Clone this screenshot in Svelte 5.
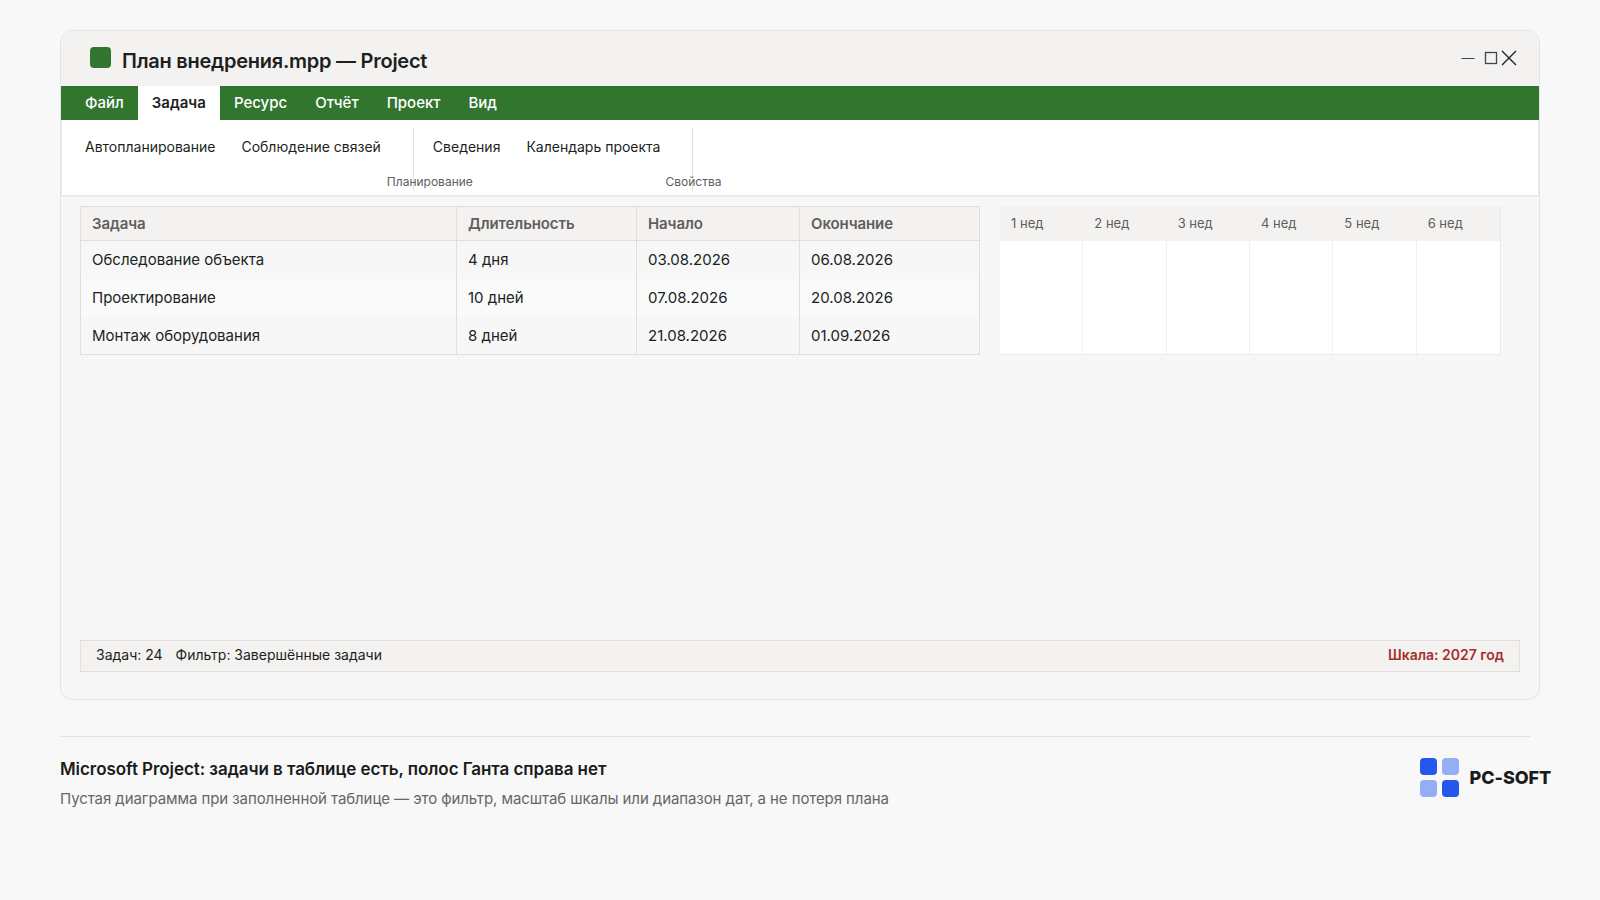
<script>
  const tabs = ['Файл', 'Задача', 'Ресурс', 'Отчёт', 'Проект', 'Вид'];
  const rows = [
    ['Обследование объекта', '4 дня', '03.08.2026', '06.08.2026'],
    ['Проектирование', '10 дней', '07.08.2026', '20.08.2026'],
    ['Монтаж оборудования', '8 дней', '21.08.2026', '01.09.2026']
  ];
  const weeks = ['1 нед', '2 нед', '3 нед', '4 нед', '5 нед', '6 нед'];
</script>

<div class="page">
  <div class="window">
    <header class="titlebar">
      <div class="title">
        <span class="app-icon"></span>
        <h1>План внедрения.mpp — Project</h1>
      </div>
      <div class="controls">
        <svg width="14" height="14" viewBox="0 0 14 14"><path d="M0.5 7.5H13.5" stroke="#444" stroke-width="1.1" fill="none" /></svg>
        <svg width="14" height="14" viewBox="0 0 14 14"><rect x="1.5" y="1.5" width="11" height="11" stroke="#444" stroke-width="1.3" fill="none" /></svg>
        <svg width="16" height="16" viewBox="0 0 16 16"><path d="M1 1L15 15M15 1L1 15" stroke="#222" stroke-width="1.4" fill="none" /></svg>
      </div>
    </header>

    <nav class="tabs">
      {#each tabs as tab}
        <span class="tab" class:active={tab === 'Задача'}>{tab}</span>
      {/each}
    </nav>

    <div class="ribbon">
      <div class="group">
        <span>Автопланирование</span>
        <span>Соблюдение связей</span>
        <small class="plan">Планирование</small>
      </div>
      <div class="group">
        <span>Сведения</span>
        <span>Календарь проекта</span>
        <small class="props">Свойства</small>
      </div>
    </div>

    <div class="content">
      <div class="views">
        <table>
          <thead>
            <tr>
              <th class="c1">Задача</th>
              <th class="c2">Длительность</th>
              <th class="c3">Начало</th>
              <th>Окончание</th>
            </tr>
          </thead>
          <tbody>
            {#each rows as row}
              <tr>
                {#each row as cell}
                  <td>{cell}</td>
                {/each}
              </tr>
            {/each}
          </tbody>
        </table>

        <div class="gantt">
          {#each weeks as week}
            <div class="week">
              <div class="week-head">{week}</div>
              <div class="week-body"></div>
            </div>
          {/each}
        </div>
      </div>

      <div class="status">
        <div class="status-left">
          <span>Задач: 24</span>
          <span>Фильтр: Завершённые задачи</span>
        </div>
        <strong>Шкала: 2027 год</strong>
      </div>
    </div>
  </div>

  <footer class="footer">
    <div>
      <h2>Microsoft Project: задачи в таблице есть, полос Ганта справа нет</h2>
      <p>Пустая диаграмма при заполненной таблице — это фильтр, масштаб шкалы или диапазон дат, а не потеря плана</p>
    </div>
    <div class="logo">
      <div class="logo-mark">
        <i></i><i class="light"></i><i class="light"></i><i></i>
      </div>
      <span>PC-SOFT</span>
    </div>
  </footer>
</div>

<style>
  :global(body) {
    background: #f8f8f8;
    font-family: Inter, "Noto Sans", sans-serif;
    color: #201f1e;
  }

  .page {
    width: 1600px;
    height: 900px;
    box-sizing: border-box;
    padding: 30px 60px 0;
    overflow: hidden;
  }

  .window {
    width: 1480px;
    height: 670px;
    box-sizing: border-box;
    border: 1px solid #e4e4e4;
    border-radius: 12px;
    background: #f7f7f7;
    overflow: hidden;
    display: flex;
    flex-direction: column;
  }

  .titlebar {
    height: 55px;
    flex: none;
    background: #f3f2f1;
    display: flex;
    justify-content: space-between;
    align-items: center;
    padding: 0 22px 0 29px;
  }

  .title {
    display: flex;
    align-items: center;
    gap: 11px;
  }

  .app-icon {
    width: 21px;
    height: 21px;
    border-radius: 4px;
    background: #31752f;
    margin-top: -3px;
  }

  h1 {
    margin: 4px 0 0;
    font-size: 20px;
    font-weight: 600;
    line-height: 28px;
    letter-spacing: -0.25px;
  }

  .controls {
    display: flex;
    align-items: center;
    gap: 3px;
    margin-top: -2px;
  }

  .controls svg:first-child {
    margin-right: 6px;
  }

  .tabs {
    height: 34px;
    flex: none;
    background: #31752f;
    display: flex;
    padding-left: 10px;
    box-sizing: border-box;
  }

  .tab {
    padding: 0 14px;
    font-size: 15px;
    font-weight: 500;
    line-height: 33px;
    color: #fff;
  }

  .tab.active {
    background: #fff;
    color: #201f1e;
    font-weight: 600;
  }

  .ribbon {
    height: 77px;
    flex: none;
    box-sizing: border-box;
    background: #fff;
    border: 1px solid #ebebeb;
    border-width: 0 1px 2px;
    display: flex;
    align-items: flex-start;
    padding: 8px 0 0 21px;
    font-size: 14px;
  }

  .group {
    position: relative;
    height: 63px;
    display: flex;
    gap: 26px;
    padding: 9px 32px 0 2px;
    box-sizing: border-box;
    border-right: 1px solid #e1dfdd;
    margin-right: 17px;
  }

  .group span {
    line-height: 20px;
    white-space: nowrap;
  }

  .group small {
    position: absolute;
    bottom: 1px;
    font-size: 12px;
    line-height: 16px;
    color: #605e5c;
  }

  .plan {
    right: -60px;
  }

  .props {
    right: -29px;
  }

  .content {
    flex: 1;
    display: flex;
    flex-direction: column;
    justify-content: space-between;
    padding: 9px 19px 27px;
  }

  .views {
    display: flex;
    gap: 20px;
    align-items: flex-start;
  }

  table {
    width: 900px;
    height: 149px;
    flex: none;
    border-collapse: collapse;
    table-layout: fixed;
    border: 1px solid #e1dfdd;
    font-size: 15px;
  }

  th {
    box-sizing: border-box;
    height: 34px;
    padding: 0 11px;
    text-align: left;
    font-size: 15px;
    font-weight: 600;
    letter-spacing: -0.1px;
    color: #605e5c;
    background: #f3f2f1;
    border: 1px solid #e1dfdd;
  }

  td {
    padding: 0 11px;
    height: 37px;
    border-left: 1px solid #e1dfdd;
  }

  tbody tr:nth-child(even) td {
    background: #fafafa;
  }

  .c1 {
    width: 376px;
  }

  .c2 {
    width: 180px;
  }

  .c3 {
    width: 163px;
  }

  .gantt {
    width: 501px;
    height: 149px;
    display: grid;
    grid-template-columns: repeat(6, 1fr);
    background: #fff;
    border-bottom: 1px solid #ebebeb;
    border-right: 1px solid #ebebeb;
    box-sizing: border-box;
  }

  .week {
    display: flex;
    flex-direction: column;
  }

  .week-head {
    height: 35px;
    flex: none;
    box-sizing: border-box;
    padding: 8px 11px 0;
    background: #f3f2f1;
    font-size: 13px;
    line-height: 18px;
    color: #605e5c;
  }

  .week-body {
    flex: 1;
    border-right: 1px solid #f0f0f0;
  }

  .week:last-child .week-body {
    border-right: 0;
  }

  .status {
    height: 32px;
    box-sizing: border-box;
    display: flex;
    justify-content: space-between;
    align-items: center;
    padding: 0 15px 3px;
    background: #f3f2f1;
    border: 1px solid #e1dfdd;
    font-size: 14px;
  }

  .status-left {
    display: flex;
    gap: 13px;
  }

  .status strong {
    font-weight: 600;
    color: #a4302f;
  }

  .footer {
    width: 1470px;
    margin-top: 36px;
    border-top: 1px solid #e1e1e1;
    padding-top: 21px;
    display: flex;
    justify-content: space-between;
    align-items: flex-start;
    box-sizing: border-box;
  }

  h2 {
    margin: 0;
    font-size: 17px;
    font-weight: 600;
    line-height: 22px;
    letter-spacing: -0.06px;
    color: #1b1b1b;
  }

  p {
    margin: 9px 0 0;
    font-size: 15px;
    line-height: 20px;
    letter-spacing: -0.08px;
    color: #666;
  }

  .logo {
    display: flex;
    align-items: center;
    gap: 11px;
    margin-right: -21px;
    font-size: 18px;
    font-weight: 800;
    letter-spacing: -0.1px;
    color: #1b1b1b;
  }

  .logo-mark {
    display: grid;
    grid-template-columns: 17px 17px;
    grid-auto-rows: 17px;
    gap: 5px;
  }

  .logo-mark i {
    border-radius: 4px;
    background: #2458ec;
  }

  .logo-mark i.light {
    background: #94aef4;
  }
</style>
